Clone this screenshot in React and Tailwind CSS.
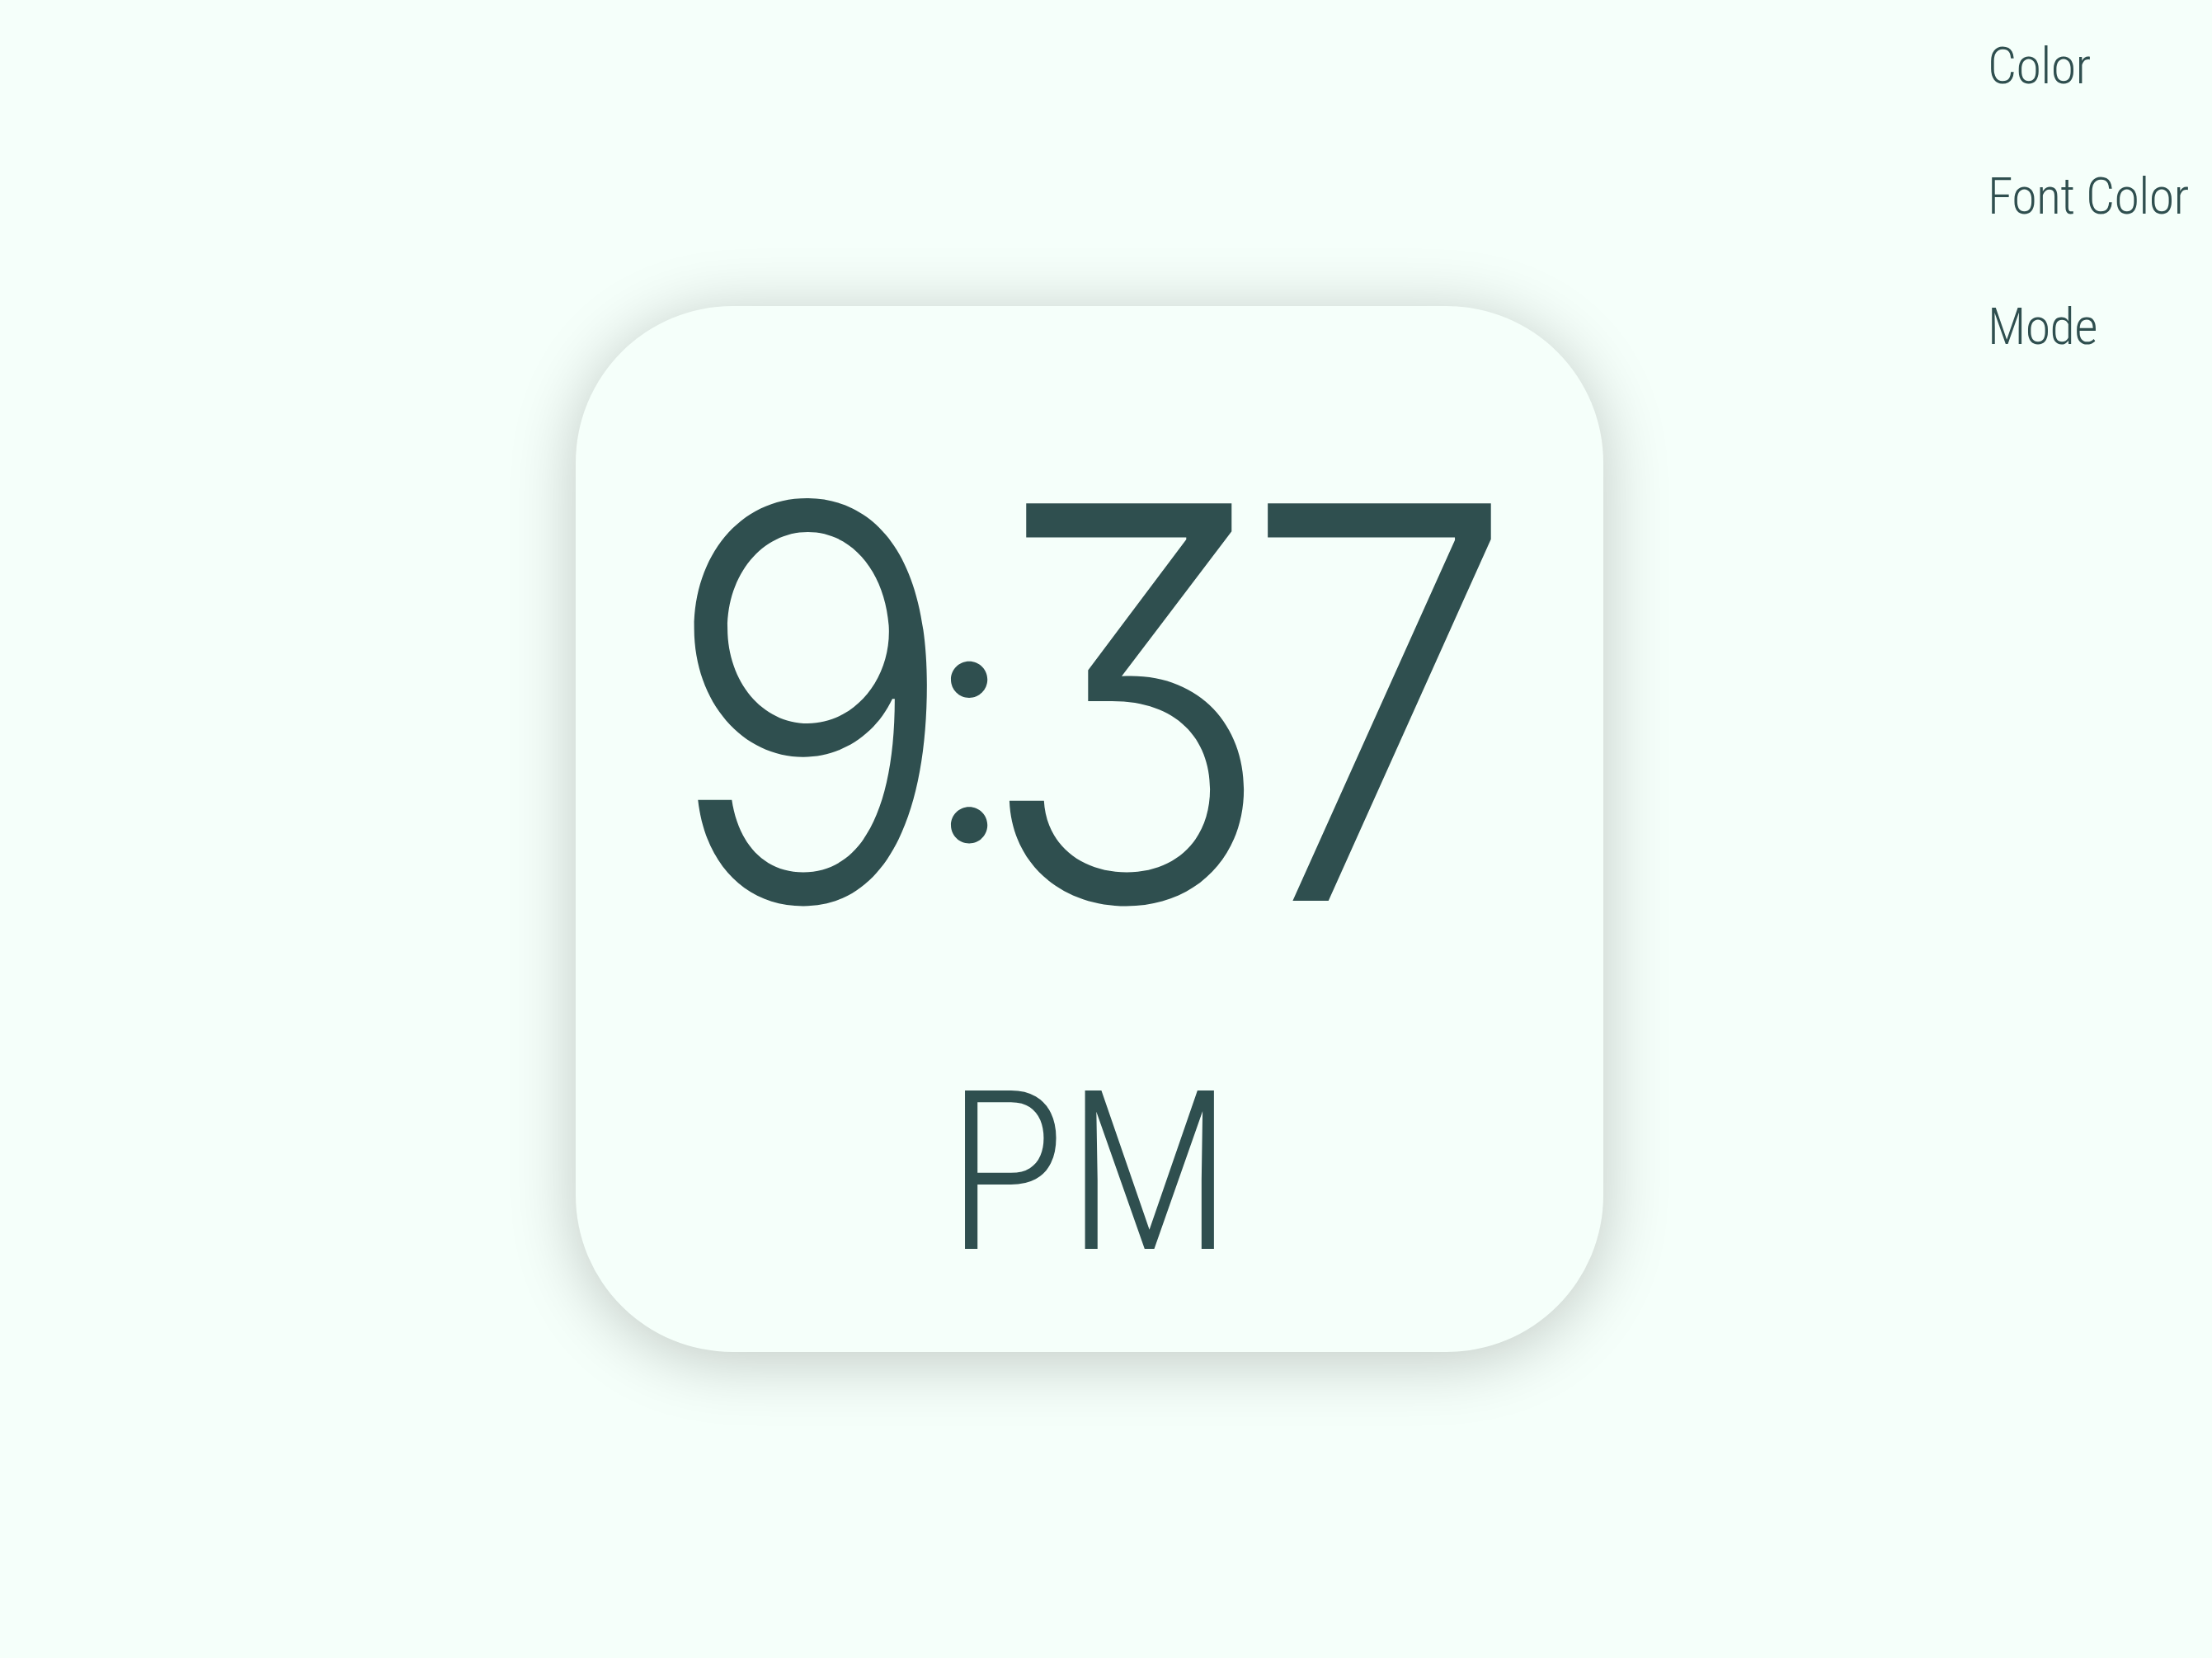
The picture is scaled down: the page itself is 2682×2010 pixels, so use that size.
import React from 'react';

const menu = ['Color', 'Font Color', 'Mode'];

export default function App() {
  return (
    <div className="relative flex h-[2010px] w-full items-center justify-center overflow-hidden bg-[#f5fffa] text-[#2f4f4f]">
      {/* clock card */}
      <div className="mr-[40px] flex h-[1268px] w-[1246px] flex-col items-center rounded-[190px] bg-[#f5fffa] pt-[150px] shadow-[0_10px_80px_rgba(0,0,0,0.22)]">
        <div className="flex scale-x-[0.9] items-end font-['Inter',sans-serif] font-light leading-none [font-feature-settings:'cv09']">
          <span className="text-[662px] tracking-[-47px]">9</span>
          <span className="mb-[106px] scale-x-[1.11] text-[420px] tracking-[-47px]">:</span>
          <span className="text-[662px] tracking-[-45px]">3</span>
          <span className="text-[662px]">7</span>
        </div>
        <div className="mt-[104px] font-['Roboto',sans-serif] text-[270px] font-light leading-none [font-stretch:condensed]">
          PM
        </div>
      </div>

      {/* settings menu */}
      <nav className="absolute right-0 top-0 flex w-[272px] flex-col pt-[1px]">
        {menu.map(item => (
          <a
            key={item}
            href="#"
            className="h-[158px] font-['Roboto',sans-serif] text-[62px] font-light leading-[158px] tracking-[-0.01em] [font-stretch:condensed]"
          >
            {item}
          </a>
        ))}
      </nav>
    </div>
  );
}
